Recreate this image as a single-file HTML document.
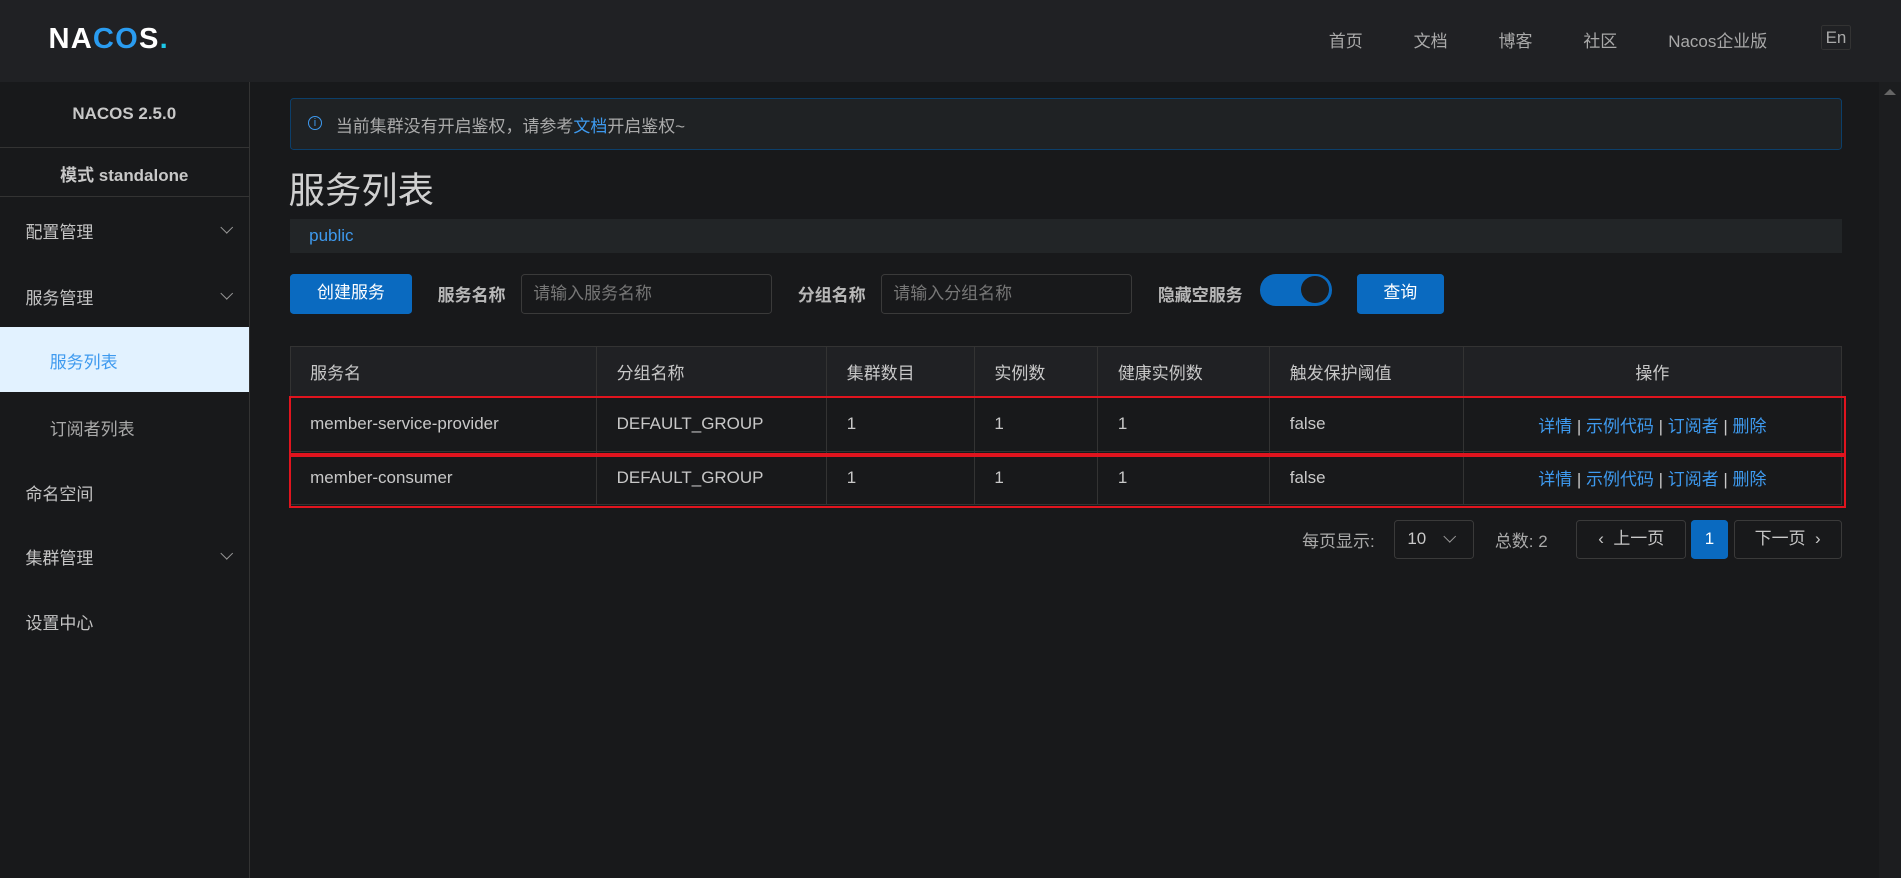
<!DOCTYPE html>
<html><head><meta charset="utf-8"><style>
html,body{margin:0;padding:0;background:#18191b;overflow:hidden}
#r{zoom:1.21237;width:1568px;height:724px;position:relative;font-family:"Liberation Sans","Noto Sans CJK SC",sans-serif;color:#c8c8c8;font-size:14px}
.a{position:absolute}
.hd{left:0;top:0;width:1568px;height:68px;background:#202124}
.nav{top:22px;font-size:14px;color:#a9a9a9}
.sb{left:0;top:68px;width:205px;height:656px;background:#18191b;border-right:1px solid #333}
.mi{left:21px;font-size:14px;color:#c4c4c4}
.chev{left:183px;width:7px;height:7px;border-right:1px solid #999;border-bottom:1px solid #999;transform:rotate(45deg)}
table{border-collapse:collapse;position:absolute;left:239px;top:285px;width:1280px}
td,th{border:1px solid #333;padding:0 16px;text-align:left;font-weight:normal;font-size:14px;color:#c8c8c8}
th{background:#202124;height:42px}
td{height:43px}
td.op{text-align:center;color:#3e9aef}
.sep{color:#c8c8c8}
.btn{background:#0a6ac0;color:#fff;border-radius:3px;text-align:center}
.inp{border:1px solid #3a3a3a;border-radius:3px;height:33px;color:#777;line-height:31px;padding-left:9px;box-sizing:border-box}
.lab{font-weight:bold;color:#b8b8b8}
.pg{border:1px solid #3a3a3a;border-radius:3px;height:32px;box-sizing:border-box;line-height:30px;color:#c8c8c8}
</style></head><body><div id="r">
<div class="a hd"></div>
<div class="a" style="left:40px;top:19px;font-size:24px;font-weight:bold;color:#fff;letter-spacing:1px">NA<span style="color:#2a9cf0">CO</span>S<span style="color:#1cc8e8">.</span></div>
<div class="a nav" style="left:1096px">首页</div>
<div class="a nav" style="left:1166px">文档</div>
<div class="a nav" style="left:1236px">博客</div>
<div class="a nav" style="left:1306px">社区</div>
<div class="a nav" style="left:1376px">Nacos企业版</div>
<div class="a nav" style="left:1502px;top:21px;border:1px solid #333;padding:1px 3px;border-radius:2px">En</div>

<div class="a sb"></div>
<div class="a" style="left:0;top:86px;width:205px;text-align:center;font-weight:bold;color:#c8c8c8">NACOS 2.5.0</div>
<div class="a" style="left:0;top:121px;width:205px;border-top:1px solid #333"></div>
<div class="a" style="left:0;top:133px;width:205px;text-align:center;font-weight:bold;color:#c8c8c8">模式 standalone</div>
<div class="a" style="left:0;top:162px;width:205px;border-top:1px solid #333"></div>
<div class="a mi" style="top:180px">配置管理</div><div class="a chev" style="top:184px"></div>
<div class="a mi" style="top:234px">服务管理</div><div class="a chev" style="top:238px"></div>
<div class="a" style="left:0;top:270px;width:205px;height:53px;background:#e2f2ff"></div>
<div class="a mi" style="left:41px;top:287px;color:#3e9aef">服务列表</div>
<div class="a mi" style="left:41px;top:342px;color:#aaa">订阅者列表</div>
<div class="a mi" style="top:396px">命名空间</div>
<div class="a mi" style="top:449px">集群管理</div><div class="a chev" style="top:453px"></div>
<div class="a mi" style="top:502px">设置中心</div>

<div class="a" style="left:1550px;top:68px;width:18px;height:656px;background:#1c1d1f"></div>
<div class="a" style="left:1554px;top:73px;width:0;height:0;border-left:5px solid transparent;border-right:5px solid transparent;border-bottom:5px solid #666"></div>

<div class="a" style="left:239px;top:81px;width:1280px;height:43px;box-sizing:border-box;border:1px solid #0c3f6a;background:#1f2224;border-radius:3px"></div>
<div class="a" style="left:254px;top:96px;width:10px;height:10px;border:1.3px solid #3e9aef;border-radius:50%;font-size:9px;color:#3e9aef;text-align:center;line-height:10px">i</div>
<div class="a" style="left:277px;top:92px;color:#aaa">当前集群没有开启鉴权，请参考<span style="color:#3e9aef">文档</span>开启鉴权~</div>
<div class="a" style="left:238px;top:134px;font-size:30px;color:#d0d0d0">服务列表</div>
<div class="a" style="left:239px;top:181px;width:1280px;height:28px;background:#222527"></div>
<div class="a" style="left:255px;top:186px;color:#3e9aef">public</div>

<div class="a btn" style="left:239px;top:226px;width:101px;height:33px;line-height:31px">创建服务</div>
<div class="a lab" style="left:361px;top:232px">服务名称</div>
<div class="a inp" style="left:430px;top:226px;width:207px">请输入服务名称</div>
<div class="a lab" style="left:658px;top:232px">分组名称</div>
<div class="a inp" style="left:727px;top:226px;width:207px">请输入分组名称</div>
<div class="a lab" style="left:955px;top:232px">隐藏空服务</div>
<div class="a" style="left:1039px;top:226px;width:60px;height:26px;border-radius:13px;background:#0a6ac0"></div>
<div class="a" style="left:1073px;top:228px;width:23px;height:22px;border-radius:50%;background:#1c1d1f"></div>
<div class="a btn" style="left:1119px;top:226px;width:72px;height:33px;line-height:31px">查询</div>

<table>
<tr><th style="width:220px">服务名</th><th style="width:157px">分组名称</th><th style="width:89px">集群数目</th><th style="width:69px">实例数</th><th style="width:109px">健康实例数</th><th style="width:127px">触发保护阈值</th><th style="text-align:center">操作</th></tr>
<tr><td>member-service-provider</td><td>DEFAULT_GROUP</td><td>1</td><td>1</td><td>1</td><td>false</td><td class="op">详情 <span class="sep">|</span> 示例代码 <span class="sep">|</span> 订阅者 <span class="sep">|</span> 删除</td></tr>
<tr><td>member-consumer</td><td>DEFAULT_GROUP</td><td>1</td><td>1</td><td>1</td><td>false</td><td class="op">详情 <span class="sep">|</span> 示例代码 <span class="sep">|</span> 订阅者 <span class="sep">|</span> 删除</td></tr>
</table>
<div class="a" style="left:238px;top:327px;width:1285px;height:48px;box-sizing:border-box;border:2px solid #e0141e"></div>
<div class="a" style="left:238px;top:375px;width:1285px;height:44px;box-sizing:border-box;border:2px solid #e0141e"></div>

<div class="a" style="left:1074px;top:435px;color:#aaa">每页显示:</div>
<div class="a pg" style="left:1150px;top:429px;width:66px;padding-left:10px">10</div>
<div class="a chev" style="left:1192px;top:439px"></div>
<div class="a" style="left:1233px;top:435px;color:#aaa">总数: 2</div>
<div class="a pg" style="left:1300px;top:429px;width:91px;text-align:center">‹&nbsp; 上一页</div>
<div class="a btn" style="left:1395px;top:429px;width:30px;height:32px;line-height:32px">1</div>
<div class="a pg" style="left:1430px;top:429px;width:89px;text-align:center">下一页 &nbsp;›</div>
</div></body></html>
